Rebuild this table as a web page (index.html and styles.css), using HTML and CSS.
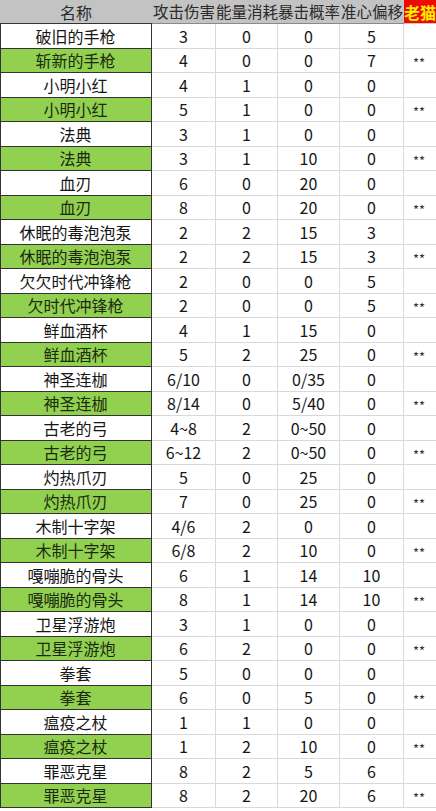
FILE: index.html
```html
<!DOCTYPE html>
<html lang="zh">
<head>
<meta charset="utf-8">
<title>武器数值表</title>
<link rel="stylesheet" href="styles.css">
</head>
<body>
<div class="sheet">
  <div class="hd name">名称</div>
  <div class="hd">攻击伤害</div>
  <div class="hd">能量消耗</div>
  <div class="hd">暴击概率</div>
  <div class="hd">准心偏移</div>
  <div class="hd cat">老猫</div>

  <div class="c name">破旧的手枪</div><div class="c">3</div><div class="c">0</div><div class="c">0</div><div class="c">5</div><div class="c mk"></div>
  <div class="c name g">斩新的手枪</div><div class="c">4</div><div class="c">0</div><div class="c">0</div><div class="c">7</div><div class="c mk">**</div>
  <div class="c name">小明小红</div><div class="c">4</div><div class="c">1</div><div class="c">0</div><div class="c">0</div><div class="c mk"></div>
  <div class="c name g">小明小红</div><div class="c">5</div><div class="c">1</div><div class="c">0</div><div class="c">0</div><div class="c mk">**</div>
  <div class="c name">法典</div><div class="c">3</div><div class="c">1</div><div class="c">0</div><div class="c">0</div><div class="c mk"></div>
  <div class="c name g">法典</div><div class="c">3</div><div class="c">1</div><div class="c">10</div><div class="c">0</div><div class="c mk">**</div>
  <div class="c name">血刃</div><div class="c">6</div><div class="c">0</div><div class="c">20</div><div class="c">0</div><div class="c mk"></div>
  <div class="c name g">血刃</div><div class="c">8</div><div class="c">0</div><div class="c">20</div><div class="c">0</div><div class="c mk">**</div>
  <div class="c name">休眠的毒泡泡泵</div><div class="c">2</div><div class="c">2</div><div class="c">15</div><div class="c">3</div><div class="c mk"></div>
  <div class="c name g">休眠的毒泡泡泵</div><div class="c">2</div><div class="c">2</div><div class="c">15</div><div class="c">3</div><div class="c mk">**</div>
  <div class="c name">欠欠时代冲锋枪</div><div class="c">2</div><div class="c">0</div><div class="c">0</div><div class="c">5</div><div class="c mk"></div>
  <div class="c name g">欠时代冲锋枪</div><div class="c">2</div><div class="c">0</div><div class="c">0</div><div class="c">5</div><div class="c mk">**</div>
  <div class="c name">鲜血酒杯</div><div class="c">4</div><div class="c">1</div><div class="c">15</div><div class="c">0</div><div class="c mk"></div>
  <div class="c name g">鲜血酒杯</div><div class="c">5</div><div class="c">2</div><div class="c">25</div><div class="c">0</div><div class="c mk">**</div>
  <div class="c name">神圣连枷</div><div class="c">6/10</div><div class="c">0</div><div class="c">0/35</div><div class="c">0</div><div class="c mk"></div>
  <div class="c name g">神圣连枷</div><div class="c">8/14</div><div class="c">0</div><div class="c">5/40</div><div class="c">0</div><div class="c mk">**</div>
  <div class="c name">古老的弓</div><div class="c">4~8</div><div class="c">2</div><div class="c">0~50</div><div class="c">0</div><div class="c mk"></div>
  <div class="c name g">古老的弓</div><div class="c">6~12</div><div class="c">2</div><div class="c">0~50</div><div class="c">0</div><div class="c mk">**</div>
  <div class="c name">灼热爪刃</div><div class="c">5</div><div class="c">0</div><div class="c">25</div><div class="c">0</div><div class="c mk"></div>
  <div class="c name g">灼热爪刃</div><div class="c">7</div><div class="c">0</div><div class="c">25</div><div class="c">0</div><div class="c mk">**</div>
  <div class="c name">木制十字架</div><div class="c">4/6</div><div class="c">2</div><div class="c">0</div><div class="c">0</div><div class="c mk"></div>
  <div class="c name g">木制十字架</div><div class="c">6/8</div><div class="c">2</div><div class="c">10</div><div class="c">0</div><div class="c mk">**</div>
  <div class="c name">嘎嘣脆的骨头</div><div class="c">6</div><div class="c">1</div><div class="c">14</div><div class="c">10</div><div class="c mk"></div>
  <div class="c name g">嘎嘣脆的骨头</div><div class="c">8</div><div class="c">1</div><div class="c">14</div><div class="c">10</div><div class="c mk">**</div>
  <div class="c name">卫星浮游炮</div><div class="c">3</div><div class="c">1</div><div class="c">0</div><div class="c">0</div><div class="c mk"></div>
  <div class="c name g">卫星浮游炮</div><div class="c">6</div><div class="c">2</div><div class="c">0</div><div class="c">0</div><div class="c mk">**</div>
  <div class="c name">拳套</div><div class="c">5</div><div class="c">0</div><div class="c">0</div><div class="c">0</div><div class="c mk"></div>
  <div class="c name g">拳套</div><div class="c">6</div><div class="c">0</div><div class="c">5</div><div class="c">0</div><div class="c mk">**</div>
  <div class="c name">瘟疫之杖</div><div class="c">1</div><div class="c">1</div><div class="c">0</div><div class="c">0</div><div class="c mk"></div>
  <div class="c name g">瘟疫之杖</div><div class="c">1</div><div class="c">2</div><div class="c">10</div><div class="c">0</div><div class="c mk">**</div>
  <div class="c name">罪恶克星</div><div class="c">8</div><div class="c">2</div><div class="c">5</div><div class="c">6</div><div class="c mk"></div>
  <div class="c name g">罪恶克星</div><div class="c">8</div><div class="c">2</div><div class="c">20</div><div class="c">6</div><div class="c mk">**</div>
</div>
</body>
</html>
```

FILE: styles.css
```css
html, body {
  margin: 0;
  padding: 0;
  background: #ffffff;
}

body {
  font-family: "Noto Sans CJK SC", "Noto Sans", sans-serif;
  color: #1a1a1a;
}

.sheet {
  display: grid;
  grid-template-columns: 152px 64px 62px 62px 64px 32px;
  grid-template-rows: 24px;
  grid-auto-rows: 24.5px;
  width: 436px;
}

.hd {
  box-sizing: border-box;
  background: #c3c3c3;
  color: #2a2a2a;
  font-size: 15.5px;
  line-height: 1;
  white-space: nowrap;
  display: flex;
  align-items: center;
  justify-content: center;
  border-bottom: 1px solid #8a8a8a;
}

.hd.name {
  font-size: 16px;
  border-bottom-color: #333333;
}

.hd.cat {
  background: #f00f00;
  background: #ee0a00;
  color: #ffee00;
  font-size: 16px;
  font-weight: bold;
  justify-content: flex-start;
  border-bottom: 1px solid #c8c8c8;
}

.c {
  box-sizing: border-box;
  display: flex;
  align-items: center;
  justify-content: center;
  font-size: 16px;
  line-height: 1;
  white-space: nowrap;
  color: #161616;
  border-right: 1px solid #d9d9d9;
  border-bottom: 1px solid #d9d9d9;
  background: #ffffff;
}

.c.name {
  border-left: 1px solid #333333;
  border-right: 1px solid #333333;
  border-bottom: 1px solid #333333;
  padding-right: 1px;
}

.c.name.g {
  background: #92d050;
  color: #1b2a10;
}

.c.mk {
  border-right: none;
  font-size: 13px;
  color: #333333;
  align-items: flex-start;
  padding-top: 7px;
  padding-right: 2px;
}
```
